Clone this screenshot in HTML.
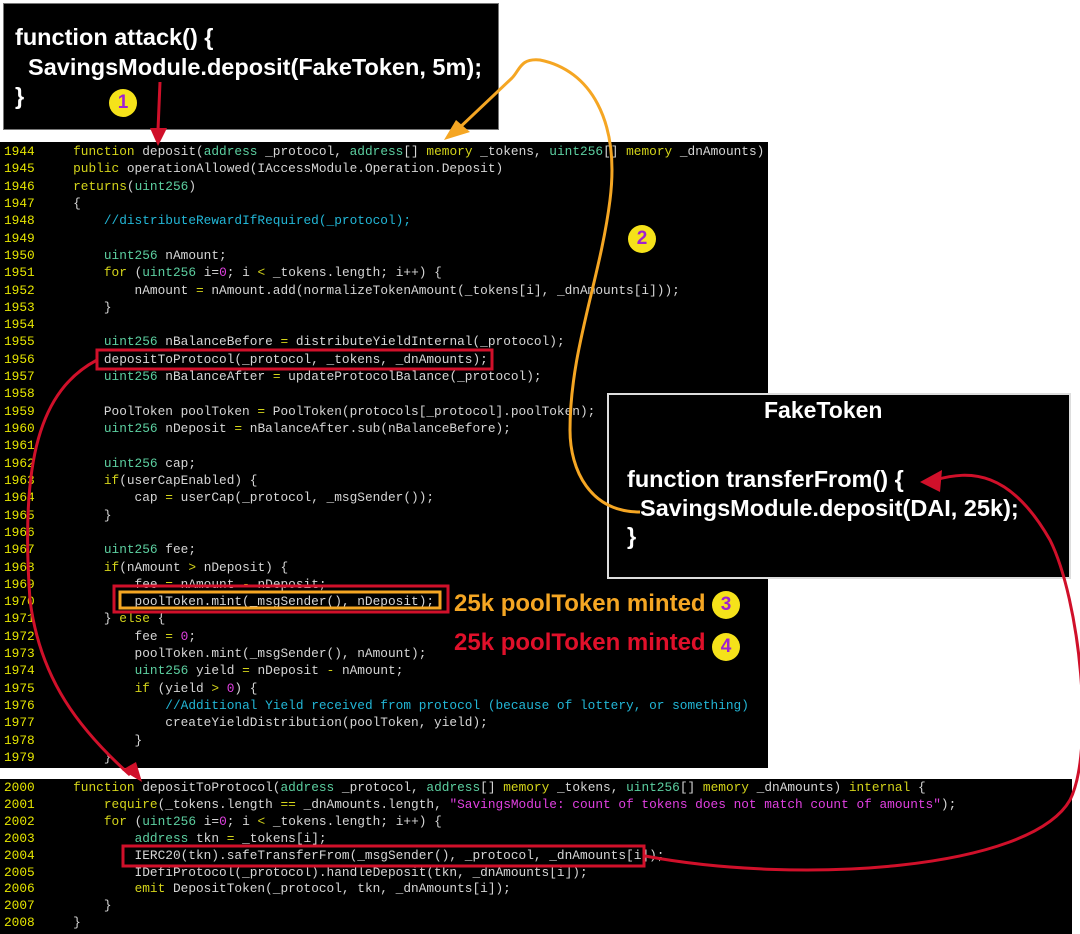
<!DOCTYPE html>
<html><head><meta charset="utf-8"><style>
body{margin:0;width:1080px;height:934px;background:#fff;position:relative;overflow:hidden;font-family:"Liberation Sans",sans-serif}
.box{position:absolute;background:#000}
pre{margin:0;font-family:"Liberation Mono",monospace;font-size:12.8px;color:#d6d6d6;position:absolute;left:4px;white-space:pre}
.ln{color:#e6e600}
.k{color:#d4d41a}.t{color:#5ccfa0}.c{color:#22b6d6}.n{color:#e040e0}
.big{position:absolute;color:#fff;font-weight:bold;font-size:23.5px;line-height:29.5px;white-space:pre}
.circ{position:absolute;width:28px;height:28px;border-radius:50%;background:#f5e21a;color:#a020d0;font-weight:bold;font-size:19px;text-align:center;line-height:28px}
.lab{position:absolute;font-weight:bold;font-size:24px}
</style></head><body>
<div class="box" style="left:3px;top:3px;width:494px;height:125px;border:1px solid #777"></div>
<div class="big" style="left:15px;top:23px">function attack() {
  SavingsModule.deposit(FakeToken, 5m);
}</div>
<div class="circ" style="left:109px;top:89px">1</div>

<div class="box" style="left:0;top:142px;width:768px;height:626px"></div>
<pre style="top:143px;line-height:17.32px"><span class="ln">1944</span>     <span class="k">function</span> deposit(<span class="t">address</span> _protocol, <span class="t">address</span>[] <span class="k">memory</span> _tokens, <span class="t">uint256</span>[] <span class="k">memory</span> _dnAmounts)
<span class="ln">1945</span>     <span class="k">public</span> operationAllowed(IAccessModule.Operation.Deposit)
<span class="ln">1946</span>     <span class="k">returns</span>(<span class="t">uint256</span>)
<span class="ln">1947</span>     {
<span class="ln">1948</span>         <span class="c">//distributeRewardIfRequired(_protocol);</span>
<span class="ln">1949</span>
<span class="ln">1950</span>         <span class="t">uint256</span> nAmount;
<span class="ln">1951</span>         <span class="k">for</span> (<span class="t">uint256</span> i=<span class="n">0</span>; i <span class="k">&lt;</span> _tokens.length; i++) {
<span class="ln">1952</span>             nAmount <span class="k">=</span> nAmount.add(normalizeTokenAmount(_tokens[i], _dnAmounts[i]));
<span class="ln">1953</span>         }
<span class="ln">1954</span>
<span class="ln">1955</span>         <span class="t">uint256</span> nBalanceBefore <span class="k">=</span> distributeYieldInternal(_protocol);
<span class="ln">1956</span>         depositToProtocol(_protocol, _tokens, _dnAmounts);
<span class="ln">1957</span>         <span class="t">uint256</span> nBalanceAfter <span class="k">=</span> updateProtocolBalance(_protocol);
<span class="ln">1958</span>
<span class="ln">1959</span>         PoolToken poolToken <span class="k">=</span> PoolToken(protocols[_protocol].poolToken);
<span class="ln">1960</span>         <span class="t">uint256</span> nDeposit <span class="k">=</span> nBalanceAfter.sub(nBalanceBefore);
<span class="ln">1961</span>
<span class="ln">1962</span>         <span class="t">uint256</span> cap;
<span class="ln">1963</span>         <span class="k">if</span>(userCapEnabled) {
<span class="ln">1964</span>             cap <span class="k">=</span> userCap(_protocol, _msgSender());
<span class="ln">1965</span>         }
<span class="ln">1966</span>
<span class="ln">1967</span>         <span class="t">uint256</span> fee;
<span class="ln">1968</span>         <span class="k">if</span>(nAmount <span class="k">&gt;</span> nDeposit) {
<span class="ln">1969</span>             fee <span class="k">=</span> nAmount <span class="k">-</span> nDeposit;
<span class="ln">1970</span>             poolToken.mint(_msgSender(), nDeposit);
<span class="ln">1971</span>         } <span class="k">else</span> {
<span class="ln">1972</span>             fee <span class="k">=</span> <span class="n">0</span>;
<span class="ln">1973</span>             poolToken.mint(_msgSender(), nAmount);
<span class="ln">1974</span>             <span class="t">uint256</span> yield <span class="k">=</span> nDeposit <span class="k">-</span> nAmount;
<span class="ln">1975</span>             <span class="k">if</span> (yield <span class="k">&gt;</span> <span class="n">0</span>) {
<span class="ln">1976</span>                 <span class="c">//Additional Yield received from protocol (because of lottery, or something)</span>
<span class="ln">1977</span>                 createYieldDistribution(poolToken, yield);
<span class="ln">1978</span>             }
<span class="ln">1979</span>         }</pre>

<div class="box" style="left:0;top:779px;width:1072px;height:155px"></div>
<pre style="top:780px;line-height:16.9px"><span class="ln">2000</span>     <span class="k">function</span> depositToProtocol(<span class="t">address</span> _protocol, <span class="t">address</span>[] <span class="k">memory</span> _tokens, <span class="t">uint256</span>[] <span class="k">memory</span> _dnAmounts) <span class="k">internal</span> {
<span class="ln">2001</span>         <span class="k">require</span>(_tokens.length <span class="k">==</span> _dnAmounts.length, <span class="n">"SavingsModule: count of tokens does not match count of amounts"</span>);
<span class="ln">2002</span>         <span class="k">for</span> (<span class="t">uint256</span> i=<span class="n">0</span>; i <span class="k">&lt;</span> _tokens.length; i++) {
<span class="ln">2003</span>             <span class="t">address</span> tkn <span class="k">=</span> _tokens[i];
<span class="ln">2004</span>             IERC20(tkn).safeTransferFrom(_msgSender(), _protocol, _dnAmounts[i]);
<span class="ln">2005</span>             IDefiProtocol(_protocol).handleDeposit(tkn, _dnAmounts[i]);
<span class="ln">2006</span>             <span class="k">emit</span> DepositToken(_protocol, tkn, _dnAmounts[i]);
<span class="ln">2007</span>         }
<span class="ln">2008</span>     }</pre>

<div class="box" style="left:607px;top:393px;width:460px;height:182px;border:2px solid #ddd"></div>
<div class="big" style="left:764px;top:396px;font-size:23px">FakeToken</div>
<div class="big" style="left:627px;top:465px;line-height:28.5px">function transferFrom() {
  SavingsModule.deposit(DAI, 25k);
}</div>

<div class="lab" style="left:454px;top:590px;color:#f5a623">25k poolToken minted</div>
<div class="lab" style="left:454px;top:629px;color:#e0102a">25k poolToken minted</div>
<div class="circ" style="left:712px;top:591px">3</div>
<div class="circ" style="left:712px;top:633px">4</div>
<div class="circ" style="left:628px;top:225px">2</div>

<svg width="1080" height="934" style="position:absolute;left:0;top:0" fill="none">
<rect x="97" y="350" width="395" height="19" stroke="#d0102a" stroke-width="3"/>
<rect x="114" y="586" width="334" height="26" stroke="#d0102a" stroke-width="3"/>
<rect x="120" y="592" width="320" height="16" stroke="#f5a623" stroke-width="3"/>
<rect x="123" y="846" width="521" height="20" stroke="#d0102a" stroke-width="3"/>
<path d="M160 82 L158 130" stroke="#d0102a" stroke-width="3"/>
<path d="M150 128 L158 146 L167 128 Z" fill="#d0102a"/>
<path d="M640 512 C590 512 570 470 570 430 C570 350 600 280 610 200 C620 120 590 70 540 60 C520 58 520 70 512 78 L455 132" stroke="#f5a623" stroke-width="3"/>
<path d="M444 140 L470 132 L456 120 Z" fill="#f5a623"/>
<path d="M97 360 C40 390 20 460 30 600 C40 680 80 730 130 775" stroke="#d0102a" stroke-width="3"/>
<path d="M122 770 L142 782 L136 762 Z" fill="#d0102a"/>
<path d="M645 856 C800 885 1030 870 1070 800 C1095 750 1080 600 1050 540 C1010 470 970 470 935 480" stroke="#d0102a" stroke-width="3"/>
<path d="M920 482 L942 470 L940 492 Z" fill="#d0102a"/>
</svg>
</body></html>
